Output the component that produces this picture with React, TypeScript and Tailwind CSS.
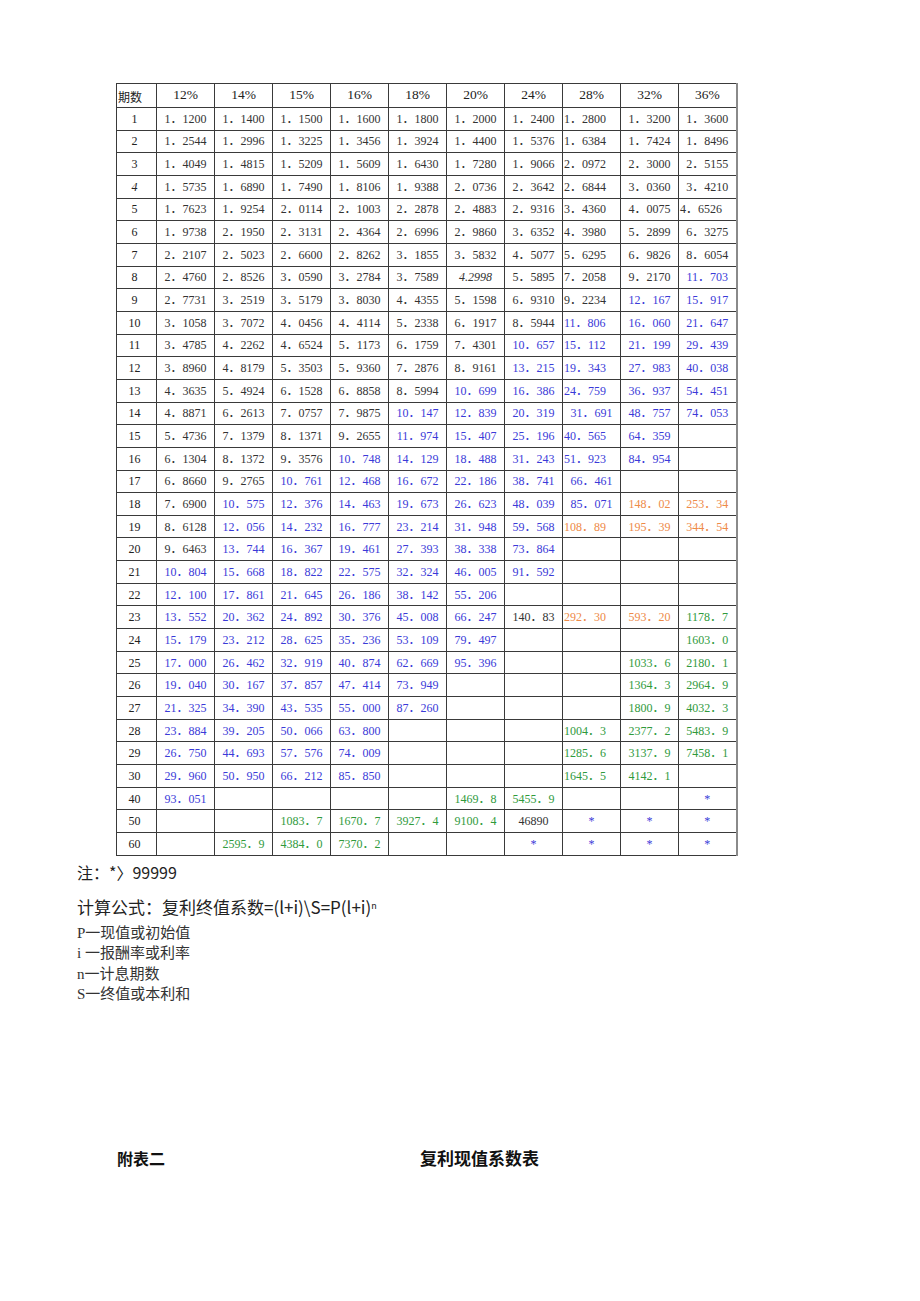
type Cell = string | [string, string];

// colour codes: k black, b blue, o orange, g green; trailing "L" = left aligned, "i" = italic
const rates = ["12%", "14%", "15%", "16%", "18%", "20%", "24%", "28%", "32%", "36%"];

const rows: [string, Cell[]][] = [
  ["1", ["1.1200", "1.1400", "1.1500", "1.1600", "1.1800", "1.2000", "1.2400", ["1.2800", "kL"], "1.3200", "1.3600"]],
  ["2", ["1.2544", "1.2996", "1.3225", "1.3456", "1.3924", "1.4400", "1.5376", ["1.6384", "kL"], "1.7424", "1.8496"]],
  ["3", ["1.4049", "1.4815", "1.5209", "1.5609", "1.6430", "1.7280", "1.9066", ["2.0972", "kL"], "2.3000", "2.5155"]],
  ["4", ["1.5735", "1.6890", "1.7490", "1.8106", "1.9388", "2.0736", "2.3642", ["2.6844", "kL"], "3.0360", "3.4210"]],
  ["5", ["1.7623", "1.9254", "2.0114", "2.1003", "2.2878", "2.4883", "2.9316", ["3.4360", "kL"], "4.0075", ["4.6526", "kL"]]],
  ["6", ["1.9738", "2.1950", "2.3131", "2.4364", "2.6996", "2.9860", "3.6352", ["4.3980", "kL"], "5.2899", "6.3275"]],
  ["7", ["2.2107", "2.5023", "2.6600", "2.8262", "3.1855", "3.5832", "4.5077", ["5.6295", "kL"], "6.9826", "8.6054"]],
  ["8", ["2.4760", "2.8526", "3.0590", "3.2784", "3.7589", ["4.2998", "ki"], "5.5895", ["7.2058", "kL"], "9.2170", ["11.703", "b"]]],
  ["9", ["2.7731", "3.2519", "3.5179", "3.8030", "4.4355", "5.1598", "6.9310", ["9.2234", "kL"], ["12.167", "b"], ["15.917", "b"]]],
  ["10", ["3.1058", "3.7072", "4.0456", "4.4114", "5.2338", "6.1917", "8.5944", ["11.806", "bL"], ["16.060", "b"], ["21.647", "b"]]],
  ["11", ["3.4785", "4.2262", "4.6524", "5.1173", "6.1759", "7.4301", ["10.657", "b"], ["15.112", "bL"], ["21.199", "b"], ["29.439", "b"]]],
  ["12", ["3.8960", "4.8179", "5.3503", "5.9360", "7.2876", "8.9161", ["13.215", "b"], ["19.343", "bL"], ["27.983", "b"], ["40.038", "b"]]],
  ["13", ["4.3635", "5.4924", "6.1528", "6.8858", "8.5994", ["10.699", "b"], ["16.386", "b"], ["24.759", "bL"], ["36.937", "b"], ["54.451", "b"]]],
  ["14", ["4.8871", "6.2613", "7.0757", "7.9875", ["10.147", "b"], ["12.839", "b"], ["20.319", "b"], ["31.691", "b"], ["48.757", "b"], ["74.053", "b"]]],
  ["15", ["5.4736", "7.1379", "8.1371", "9.2655", ["11.974", "b"], ["15.407", "b"], ["25.196", "b"], ["40.565", "bL"], ["64.359", "b"], ""]],
  ["16", ["6.1304", "8.1372", "9.3576", ["10.748", "b"], ["14.129", "b"], ["18.488", "b"], ["31.243", "b"], ["51.923", "bL"], ["84.954", "b"], ""]],
  ["17", ["6.8660", "9.2765", ["10.761", "b"], ["12.468", "b"], ["16.672", "b"], ["22.186", "b"], ["38.741", "b"], ["66.461", "b"], "", ""]],
  ["18", ["7.6900", ["10.575", "b"], ["12.376", "b"], ["14.463", "b"], ["19.673", "b"], ["26.623", "b"], ["48.039", "b"], ["85.071", "b"], ["148.02", "o"], ["253.34", "o"]]],
  ["19", ["8.6128", ["12.056", "b"], ["14.232", "b"], ["16.777", "b"], ["23.214", "b"], ["31.948", "b"], ["59.568", "b"], ["108.89", "oL"], ["195.39", "o"], ["344.54", "o"]]],
  ["20", ["9.6463", ["13.744", "b"], ["16.367", "b"], ["19.461", "b"], ["27.393", "b"], ["38.338", "b"], ["73.864", "b"], "", "", ""]],
  ["21", [["10.804", "b"], ["15.668", "b"], ["18.822", "b"], ["22.575", "b"], ["32.324", "b"], ["46.005", "b"], ["91.592", "b"], "", "", ""]],
  ["22", [["12.100", "b"], ["17.861", "b"], ["21.645", "b"], ["26.186", "b"], ["38.142", "b"], ["55.206", "b"], "", "", "", ""]],
  ["23", [["13.552", "b"], ["20.362", "b"], ["24.892", "b"], ["30.376", "b"], ["45.008", "b"], ["66.247", "b"], "140.83", ["292.30", "oL"], ["593.20", "o"], ["1178.7", "g"]]],
  ["24", [["15.179", "b"], ["23.212", "b"], ["28.625", "b"], ["35.236", "b"], ["53.109", "b"], ["79.497", "b"], "", "", "", ["1603.0", "g"]]],
  ["25", [["17.000", "b"], ["26.462", "b"], ["32.919", "b"], ["40.874", "b"], ["62.669", "b"], ["95.396", "b"], "", "", ["1033.6", "g"], ["2180.1", "g"]]],
  ["26", [["19.040", "b"], ["30.167", "b"], ["37.857", "b"], ["47.414", "b"], ["73.949", "b"], "", "", "", ["1364.3", "g"], ["2964.9", "g"]]],
  ["27", [["21.325", "b"], ["34.390", "b"], ["43.535", "b"], ["55.000", "b"], ["87.260", "b"], "", "", "", ["1800.9", "g"], ["4032.3", "g"]]],
  ["28", [["23.884", "b"], ["39.205", "b"], ["50.066", "b"], ["63.800", "b"], "", "", "", ["1004.3", "gL"], ["2377.2", "g"], ["5483.9", "g"]]],
  ["29", [["26.750", "b"], ["44.693", "b"], ["57.576", "b"], ["74.009", "b"], "", "", "", ["1285.6", "gL"], ["3137.9", "g"], ["7458.1", "g"]]],
  ["30", [["29.960", "b"], ["50.950", "b"], ["66.212", "b"], ["85.850", "b"], "", "", "", ["1645.5", "gL"], ["4142.1", "g"], ""]],
  ["40", [["93.051", "b"], "", "", "", "", ["1469.8", "g"], ["5455.9", "g"], "", "", ["*", "b"]]],
  ["50", ["", "", ["1083.7", "g"], ["1670.7", "g"], ["3927.4", "g"], ["9100.4", "g"], "46890", ["*", "b"], ["*", "b"], ["*", "b"]]],
  ["60", ["", ["2595.9", "g"], ["4384.0", "g"], ["7370.2", "g"], "", "", ["*", "b"], ["*", "b"], ["*", "b"], ["*", "b"]]],
];

const serif = "font-['Liberation_Serif','Noto_Sans_CJK_SC',serif]";

function NumCell({ cell, last }: { cell: Cell; last: boolean }) {
  const [text, code] = typeof cell === "string" ? [cell, "k"] : cell;
  const colour =
    code[0] === "b"
      ? "text-[#3a3ad8]"
      : code[0] === "o"
        ? "text-[#ee8a48]"
        : code[0] === "g"
          ? "text-[#2f9a3c]"
          : "text-[#333333]";
  const left = code.includes("L");
  const italic = code.includes("i");
  return (
    <td
      className={`border border-[#3a3a3a] p-0 text-[12px] leading-none whitespace-nowrap ${colour} ${
        left ? "text-left pl-px" : "text-center"
      } ${last ? "border-r-2 border-r-[#8a8a8a]" : ""}`}
    >
      {italic ? <span className="italic">{text}</span> : text.replace(".", "．")}
    </td>
  );
}

export default function App() {
  return (
    <div className={`h-[1301px] w-[920px] overflow-hidden bg-white ${serif}`}>
      <table className="mt-[83px] ml-[116px] table-fixed border-collapse">
        <colgroup>
          <col className="w-[40px]" />
          {rates.map((r) => (
            <col key={r} className="w-[58px]" />
          ))}
        </colgroup>
        <thead>
          <tr className="h-[24px]">
            <th className="border border-[#3a3a3a] p-0 pl-px pt-[4px] text-left text-[12px] font-normal text-[#222]">
              期数
            </th>
            {rates.map((r, i) => (
              <th
                key={r}
                className={`border border-[#3a3a3a] p-0 text-center text-[13.5px] font-normal text-[#222] ${
                  i === rates.length - 1 ? "border-r-2 border-r-[#8a8a8a]" : ""
                }`}
              >
                {r}
              </th>
            ))}
          </tr>
        </thead>
        <tbody>
          {rows.map(([n, cells]) => (
            <tr key={n} className="h-[22.67px]">
              <td className="border border-[#3a3a3a] p-0 pr-1 text-center text-[12px] leading-none text-[#222]">
                {n === "4" ? <span className="italic">4</span> : n}
              </td>
              {cells.map((c, i) => (
                <NumCell key={i} cell={c} last={i === cells.length - 1} />
              ))}
            </tr>
          ))}
        </tbody>
      </table>

      <div className="ml-[77px] font-['Noto_Sans_CJK_SC',sans-serif] text-[#222]">
        <div className="mt-[3px] text-[16px] leading-[26px]">注：*〉99999</div>
        <div className="mt-[9px] text-[17px] leading-[26px]">
          计算公式：复利终值系数=(l+i)\S=P(l+i)
          <sup className="text-[9px]">n</sup>
        </div>
        <div className={`mt-[3px] text-[15px] leading-[20.5px] text-[#333] ${serif}`}>
          <div>P一现值或初始值</div>
          <div>i 一报酬率或利率</div>
          <div>n一计息期数</div>
          <div>S一终值或本利和</div>
        </div>
      </div>

      <div className="mt-[141px] ml-[117px] flex font-['Noto_Sans_CJK_SC',sans-serif] text-[16px] font-bold leading-[24px] text-[#111]">
        <span>附表二</span>
        <span className="ml-[255px] text-[17px]">复利现值系数表</span>
      </div>
    </div>
  );
}
